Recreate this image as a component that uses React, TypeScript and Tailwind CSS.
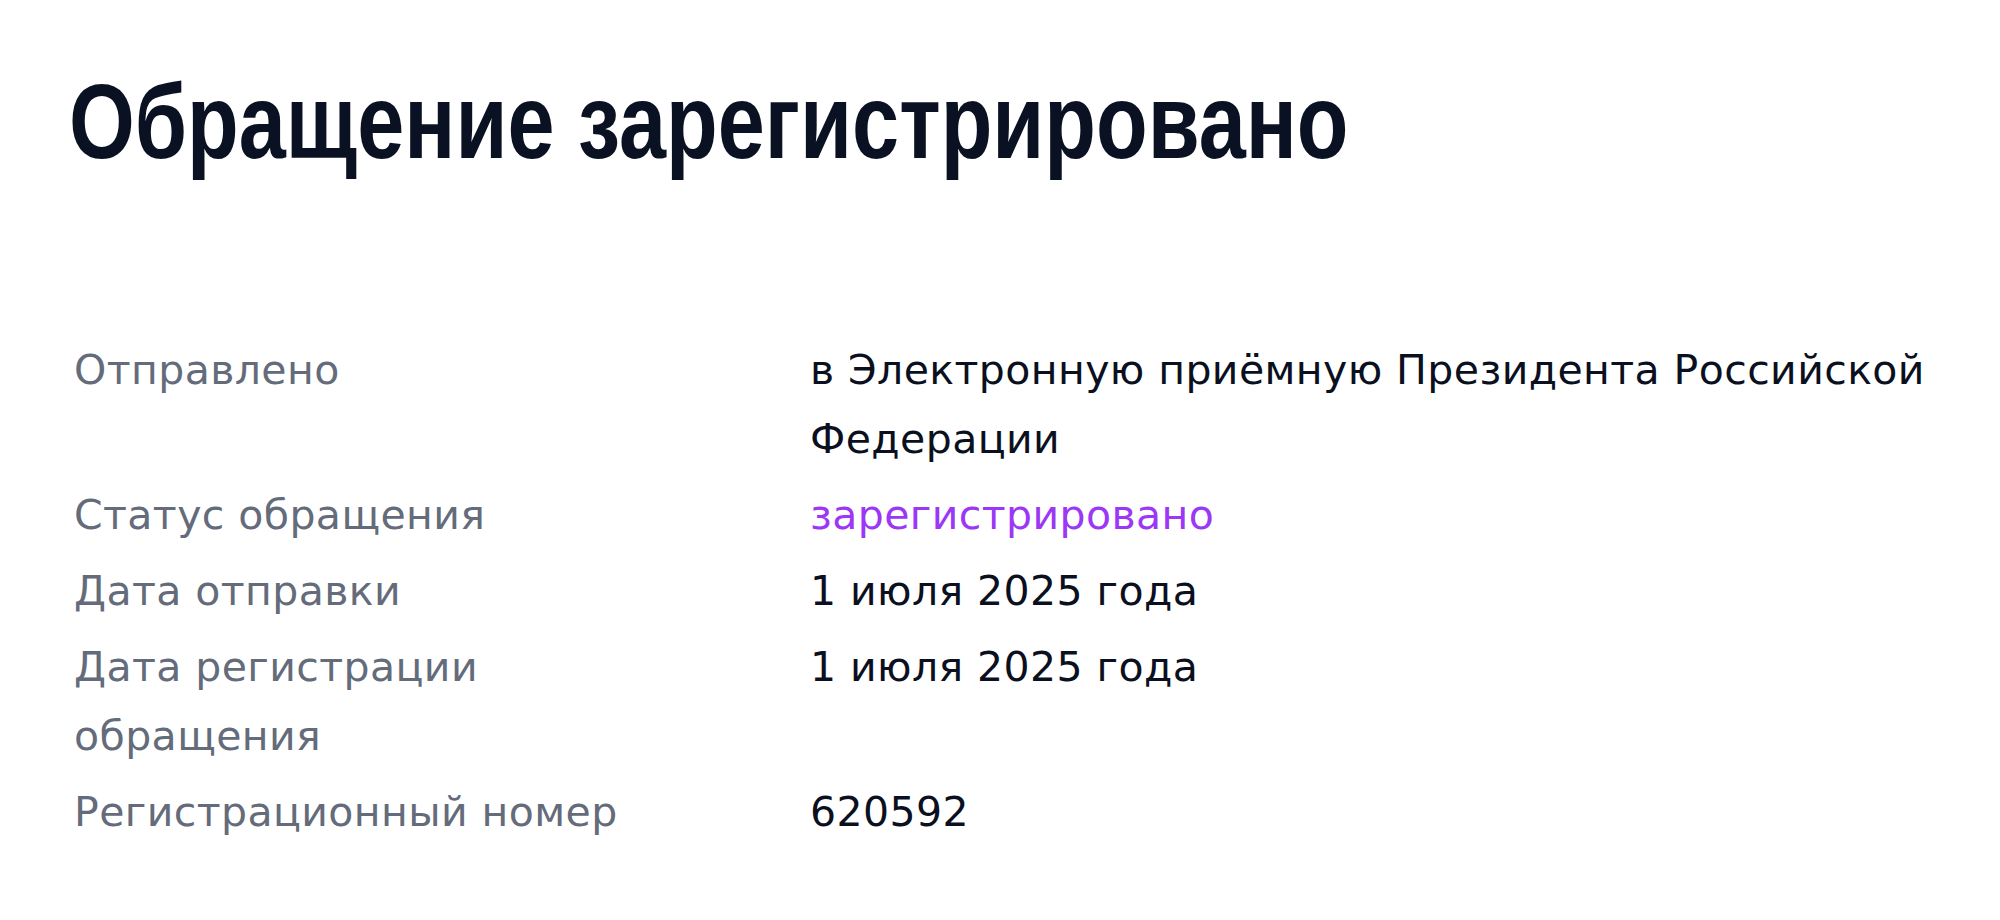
import React from "react";

interface Row {
    label: string;
    value: string;
    accent?: boolean;
}

const rows: Row[] = [
    {
        label: "Отправлено",
        value: "в Электронную приёмную Президента Российской Федерации",
    },
    { label: "Статус обращения", value: "зарегистрировано", accent: true },
    { label: "Дата отправки", value: "1 июля 2025 года" },
    { label: "Дата регистрации обращения", value: "1 июля 2025 года" },
    { label: "Регистрационный номер", value: "620592" },
];

export default function App(): React.ReactElement {
    return (
        <div className="min-h-[920px] w-full bg-white pr-[40px]">
            <div className="pt-[69px] pl-[69px]">
                {/* condensed heading: no narrow face installed, so squeeze Liberation Sans */}
                <h1 className="origin-left scale-x-[0.806] whitespace-nowrap font-['Liberation_Sans',Arial,sans-serif] text-[105px] leading-[105px] font-bold text-[#0a1122]">
                    Обращение зарегистрировано
                </h1>
            </div>

            <div className="mt-[162px] flex flex-col gap-[7px] pl-[74px] font-['DejaVu_Sans',sans-serif] text-[41px] leading-[69px] tracking-[0.01em]">
                {rows.map((row: Row) => (
                    <div key={row.label} className="flex gap-[136px]">
                        <div className="w-[600px] shrink-0 text-[#646b7a]">
                            {row.label}
                        </div>
                        <div
                            className={
                                row.accent
                                    ? "flex-1 text-[#9b37f5]"
                                    : "flex-1 text-[#0b1020]"
                            }
                        >
                            {row.value}
                        </div>
                    </div>
                ))}
            </div>
        </div>
    );
}
